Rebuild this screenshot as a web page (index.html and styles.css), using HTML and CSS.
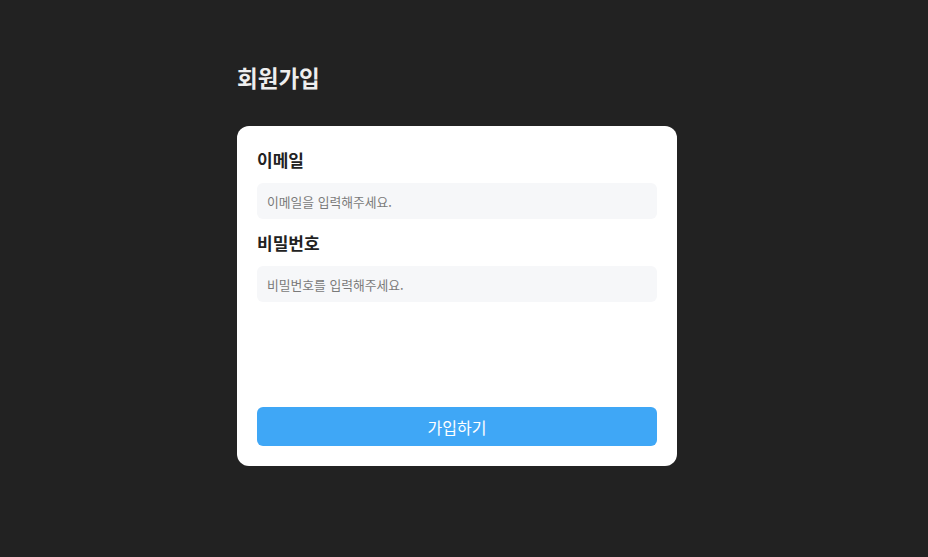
FILE: index.html
```html
<!DOCTYPE html>
<html lang="ko">
<head>
<meta charset="utf-8">
<link rel="stylesheet" href="styles.css">
</head>
<body>
<main class="page">
  <h1 class="title">회원가입</h1>
  <form class="card">
    <div class="field">
      <label class="label" for="email">이메일</label>
      <input class="input" id="email" type="email" placeholder="이메일을 입력해주세요.">
    </div>
    <div class="field">
      <label class="label" for="pw">비밀번호</label>
      <input class="input" id="pw" type="password" placeholder="비밀번호를 입력해주세요.">
    </div>
    <button class="submit" type="button">가입하기</button>
  </form>
</main>
</body>
</html>
```
FILE: styles.css
```css
html, body {
  margin: 0;
  padding: 0;
  background: #222222;
  font-family: "Noto Sans CJK KR", "Noto Sans", sans-serif;
}
.page {
  width: 440px;
  margin-left: 237px;
  padding-top: 58px;
}
.title {
  margin: 0 0 30px;
  font-size: 22.5px;
  line-height: 38px;
  font-weight: 700;
  color: #eeeeee;
}
.card {
  box-sizing: border-box;
  height: 340px;
  background: #ffffff;
  border-radius: 12px;
  padding: 20px;
  display: flex;
  flex-direction: column;
}
.field {
  display: flex;
  flex-direction: column;
}
.field + .field {
  margin-top: 10px;
}
.label {
  font-size: 17px;
  line-height: 27px;
  font-weight: 700;
  color: #222222;
  margin-bottom: 10px;
}
.input {
  box-sizing: border-box;
  height: 36px;
  border: none;
  outline: none;
  border-radius: 6px;
  background: #f6f7f9;
  padding: 0 10px;
  font-family: inherit;
  font-size: 12.8px;
  color: #333;
}
.input::placeholder {
  color: #7a7a7a;
}
.submit {
  margin-top: auto;
  height: 39px;
  border: none;
  border-radius: 6px;
  background: #3fa7f6;
  color: #ffffff;
  font-family: inherit;
  font-size: 16px;
  font-weight: 400;
}
```
